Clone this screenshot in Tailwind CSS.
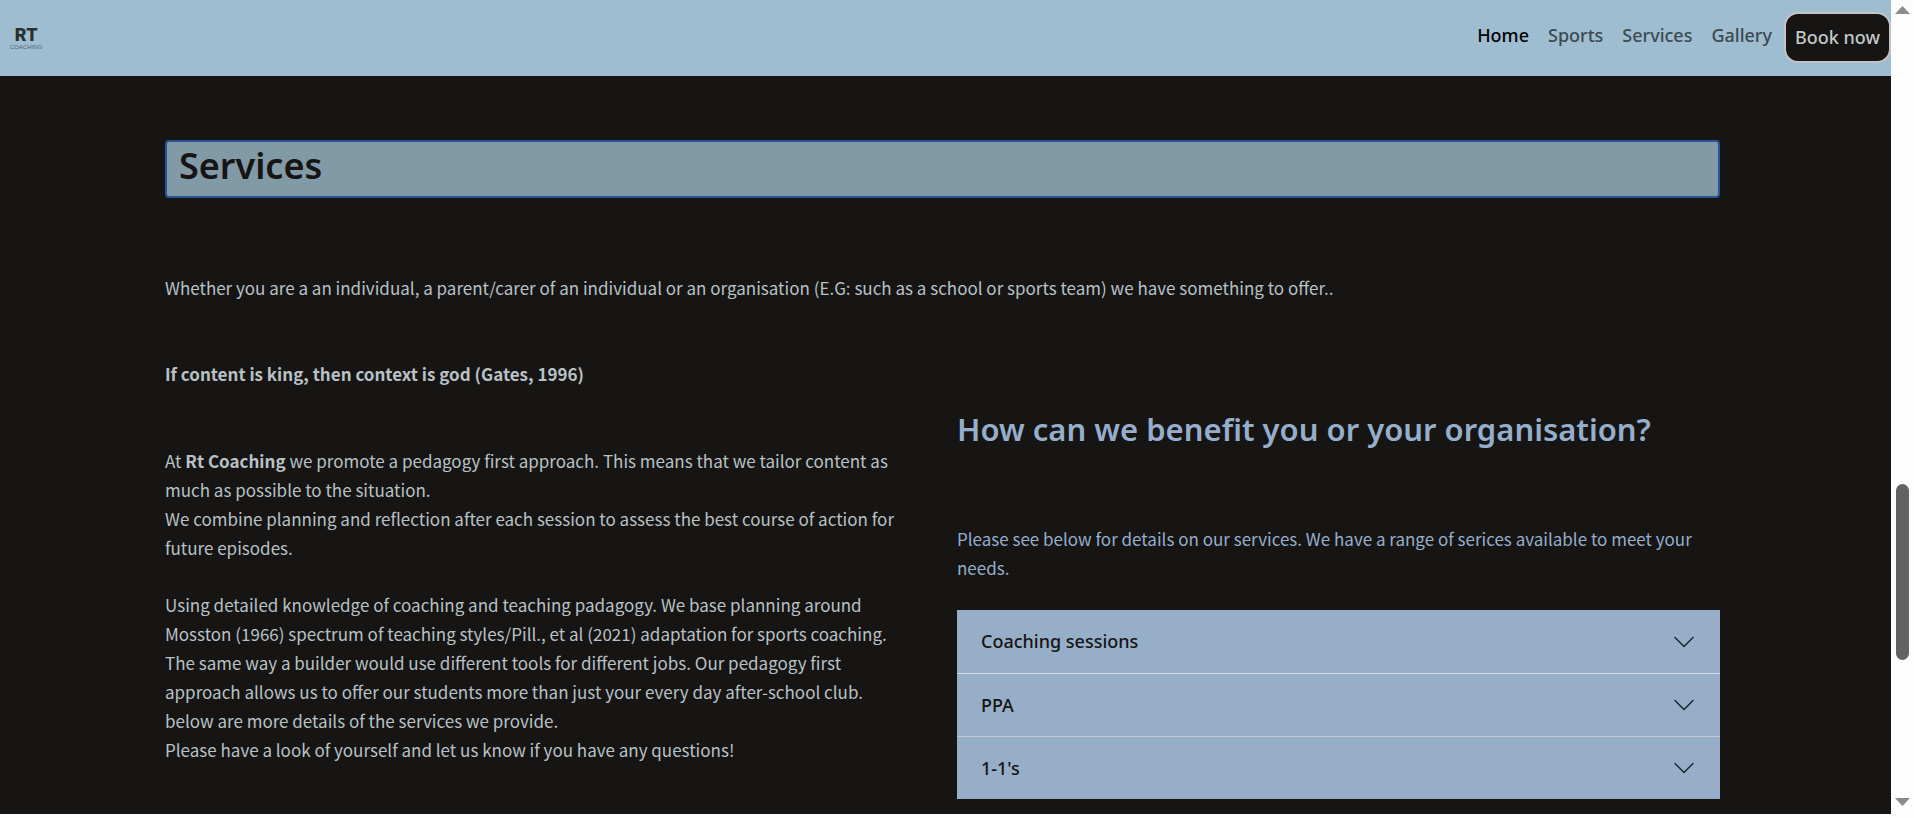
<!DOCTYPE html>
<html lang="en">
<head>
<meta charset="utf-8">
<title>RT Coaching - Services</title>
<script src="https://cdn.jsdelivr.net/npm/@tailwindcss/browser@4"></script>
</head>
<body class="flex h-screen overflow-hidden bg-[#fdfdfd] font-['Noto_Sans_CJK_SC',sans-serif] text-[17px] leading-[29px] text-[#b9c1c6]">
  <div class="mb-1 flex min-w-0 flex-1 flex-col overflow-hidden bg-[#161513]">
    <header class="flex h-19 shrink-0 items-start justify-between bg-[#9ebdd0] font-['Noto_Sans',sans-serif]">
      <a href="#" aria-label="RT Coaching" class="ml-2.5 mt-6 flex flex-col items-center text-[#2b302f]">
        <span class="font-['Roboto',sans-serif] text-[18px] font-black leading-[21px]">RT</span>
        <span class="font-['Liberation_Sans',sans-serif] text-[6px] leading-[5px] text-[#58666e]">COACHING</span>
      </a>
      <nav class="flex items-start pt-3 text-[18px] font-medium text-[#3c4a52]">
        <div class="flex gap-[19px] pt-2 leading-[30px]">
          <a href="#" class="text-black">Home</a>
          <a href="#">Sports</a>
          <a href="#">Services</a>
          <a href="#">Gallery</a>
        </div>
        <button class="ml-3 h-[51px] w-[107px] rounded-[14px] border-2 border-[#c4c4c8] bg-[#161513] text-[18px] text-[#c4c8ca]">Book now</button>
      </nav>
    </header>
    <main class="ml-[165px] mr-[171px] mt-16">
      <h1 class="h-[58px] rounded border-2 border-[#265598] bg-[#8299a6] px-3 font-['Noto_Sans',sans-serif] text-[36px] font-semibold leading-[48px] text-[#161513]">Services</h1>
      <p class="mt-[75px]">Whether you are a an individual, a parent/carer of an individual or an organisation (E.G: such as a school or sports team) we have something to offer..</p>
      <div class="mt-[57px] grid grid-cols-2 gap-[29px]">
        <section class="pr-4">
          <p class="font-bold">If content is king, then context is god (Gates, 1996)</p>
          <p class="mt-[58px]">At <b>Rt Coaching</b> we promote a pedagogy first approach. This means that we tailor content as much as possible to the situation.<br>We combine planning and reflection after each session to assess the best course of action for future episodes.</p>
          <p class="mt-7">Using detailed knowledge of coaching and teaching padagogy. We base planning around Mosston (1966) spectrum of teaching styles/Pill., et al (2021) adaptation for sports coaching. The same way a builder would use different tools for different jobs. Our pedagogy first approach allows us to offer our students more than just your every day after-school club.<br>below are more details of the services we provide.<br>Please have a look of yourself and let us know if you have any questions!</p>
        </section>
        <section class="pt-[50px] text-[#95aecb]">
          <h2 class="whitespace-nowrap font-['Noto_Sans',sans-serif] text-[31px] font-semibold leading-[40px]">How can we benefit you or your organisation?</h2>
          <p class="mt-[75px]">Please see below for details on our services. We have a range of serices available to meet your needs.</p>
          <div class="mt-7 bg-[#96aec8] font-['Noto_Sans',sans-serif] text-[18px] font-medium text-[#161513]">
            <button class="flex h-[63px] w-full items-center justify-between px-6">Coaching sessions
              <svg class="size-6" viewBox="0 0 16 16" fill="none" stroke="#1f2730" stroke-linecap="round" stroke-linejoin="round"><path d="M2 5l6 6 6-6"/></svg></button>
            <button class="flex h-[63px] w-full items-center justify-between border-t border-[#d5dde8] px-6">PPA
              <svg class="size-6" viewBox="0 0 16 16" fill="none" stroke="#1f2730" stroke-linecap="round" stroke-linejoin="round"><path d="M2 5l6 6 6-6"/></svg></button>
            <button class="flex h-[63px] w-full items-center justify-between border-t border-[#c6c6cc] px-6">1-1's
              <svg class="size-6" viewBox="0 0 16 16" fill="none" stroke="#1f2730" stroke-linecap="round" stroke-linejoin="round"><path d="M2 5l6 6 6-6"/></svg></button>
          </div>
        </section>
      </div>
    </main>
  </div>
  <aside aria-hidden="true" class="flex w-[23px] shrink-0 flex-col items-center pb-3 pt-[6px]">
    <svg class="h-2 w-[15px]" viewBox="0 0 15 8" fill="#8b8b8b"><path d="M0 8L7.500 0 15 8z"/></svg>
    <div class="mt-[470px] h-44 w-[13px] rounded-full bg-[#636363]"></div>
    <svg class="mt-auto h-2 w-[15px]" viewBox="0 0 15 8" fill="#8b8b8b"><path d="M0 0h15L7.500 8z"/></svg>
  </aside>
</body>
</html>
